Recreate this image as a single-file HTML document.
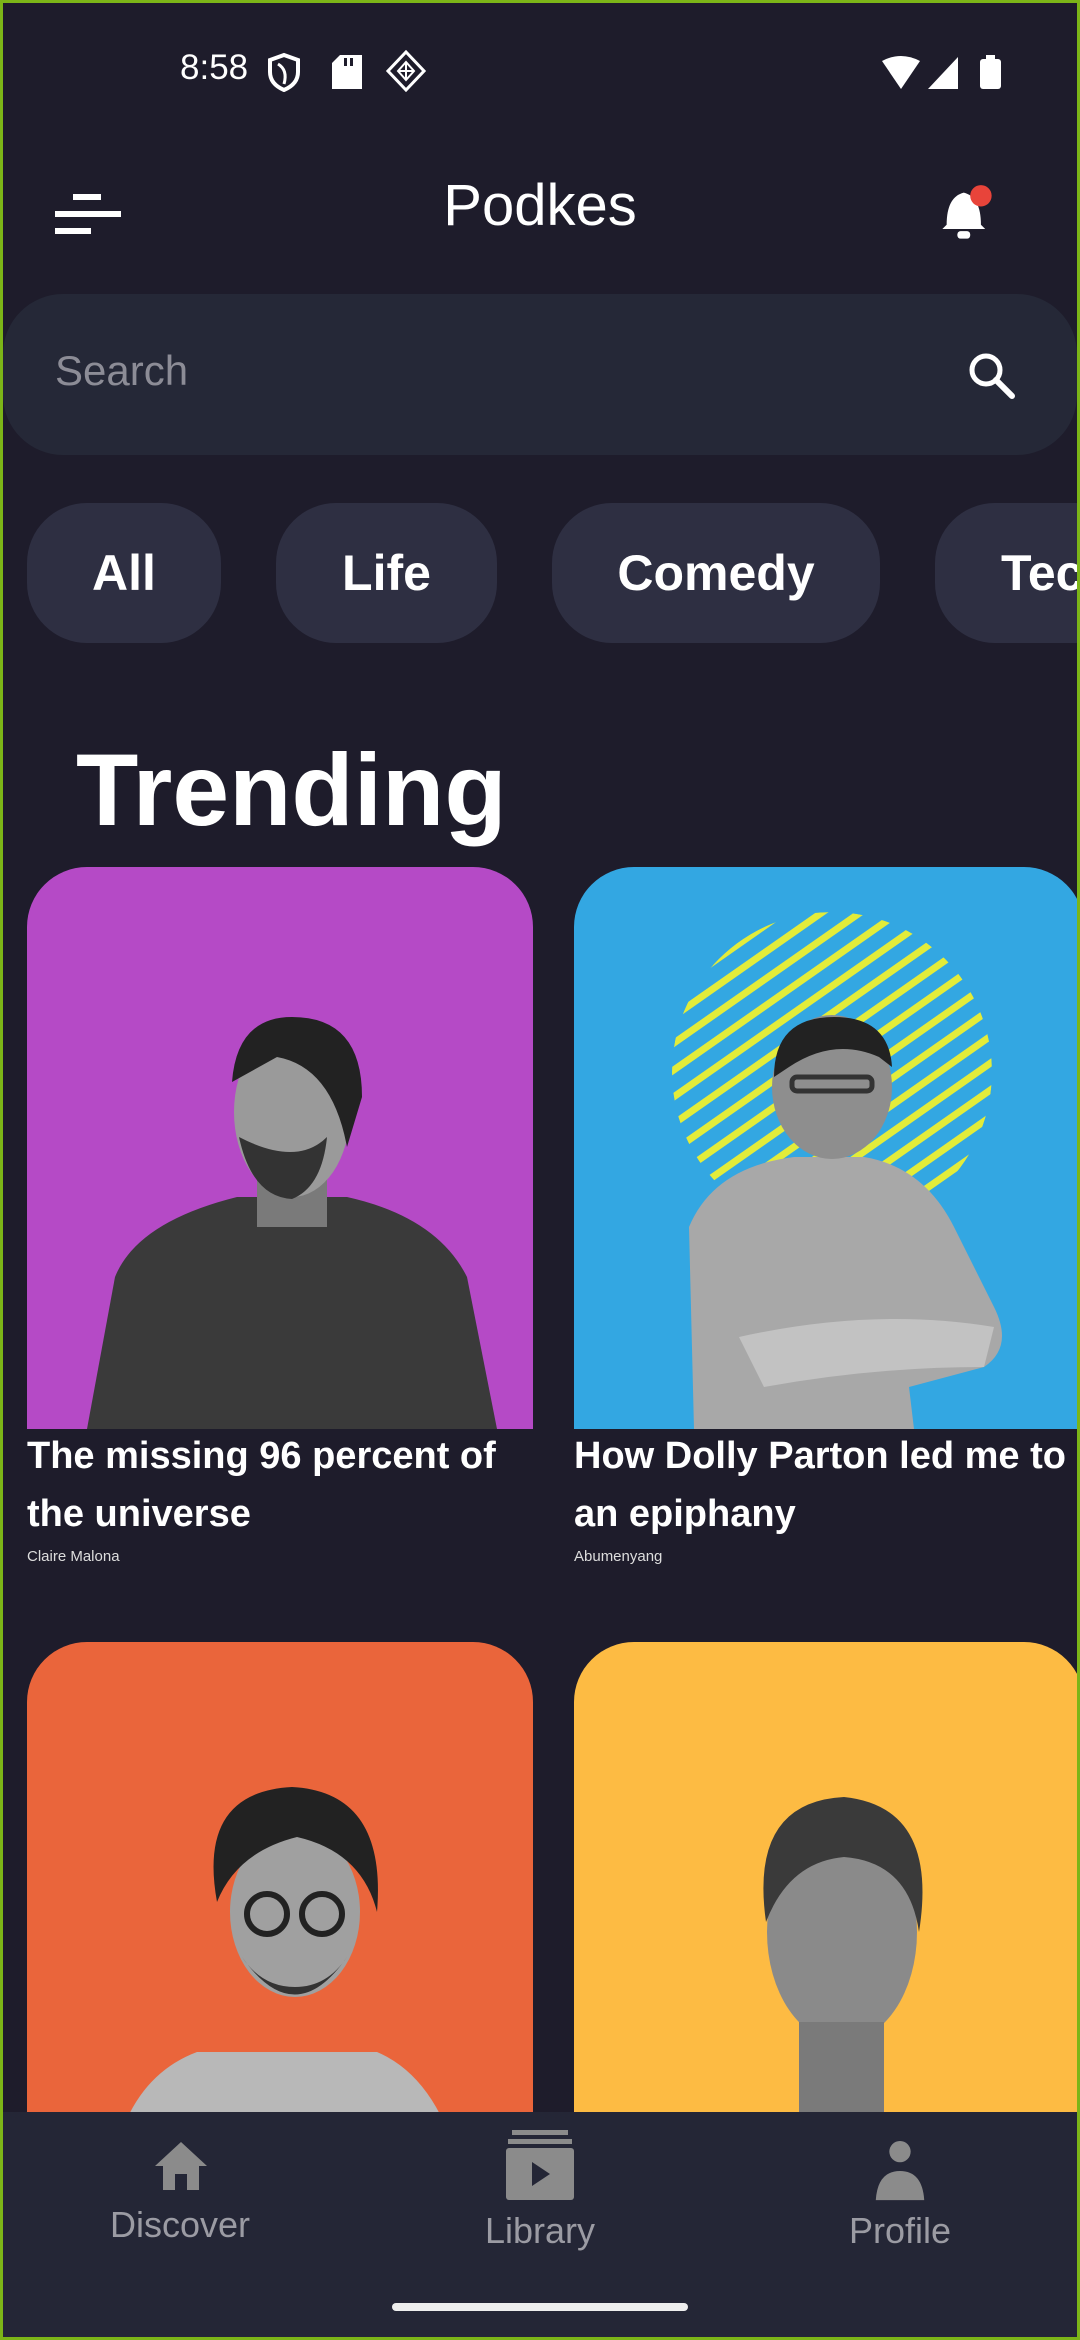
<!DOCTYPE html>
<html><head><meta charset="utf-8"><style>
*{margin:0;padding:0;box-sizing:border-box}
html,body{width:1080px;height:2340px;overflow:hidden;background:#1e1c2b}
body{position:relative;font-family:"Liberation Sans",sans-serif;color:#fff}
.a{position:absolute}
.chip{position:absolute;top:503px;height:140px;border-radius:60px;background:#2e2f42;font-weight:bold;font-size:50px;line-height:140px;text-align:center}
.card{position:absolute;border-radius:60px 60px 0 0;overflow:hidden}
.t{position:absolute;font-weight:bold;font-size:38px;line-height:58px;white-space:nowrap}
.au{position:absolute;font-size:15px;color:#ddd}
.nl{position:absolute;top:2210px;font-size:36px;color:#9b9ba3;text-align:center;width:300px}
</style></head><body>
<!-- status bar -->
<div class="a" style="left:180px;top:48px;font-size:35px">8:58</div>
<svg class="a" style="left:266px;top:52px" width="36" height="40" viewBox="0 0 36 40"><path d="M18 3 L32 8 V20 Q32 32 18 38 Q4 32 4 20 V8 Z" fill="none" stroke="#fff" stroke-width="4"/><path d="M12 12 Q22 18 18 32" fill="none" stroke="#fff" stroke-width="3"/></svg>
<svg class="a" style="left:332px;top:55px" width="30" height="34"><path d="M8 0 H30 V34 H0 V8 Z" fill="#fff"/><rect x="12" y="3" width="3" height="8" fill="#1e1c2b"/><rect x="18" y="3" width="3" height="8" fill="#1e1c2b"/></svg>
<svg class="a" style="left:386px;top:50px" width="40" height="42" viewBox="0 0 40 42"><path d="M20 2 L38 21 L20 40 L2 21 Z" fill="none" stroke="#fff" stroke-width="3"/><path d="M12 21 L20 12 L28 21 L20 30 Z M12 21 H28 M20 12 V30" fill="none" stroke="#fff" stroke-width="2"/></svg>
<svg class="a" style="left:882px;top:55px" width="124" height="36"><path d="M0 6 Q19 -4 38 6 L19 34 Z" fill="#fff"/><path d="M76 2 V34 H46 Z" fill="#fff"/><rect x="98" y="4" width="21" height="30" rx="3" fill="#fff"/><rect x="104" y="0" width="9" height="5" fill="#fff"/></svg>
<!-- app bar -->
<svg class="a" style="left:55px;top:194px" width="68" height="40"><rect x="0" y="17" width="66" height="6" fill="#fff"/><rect x="0" y="34" width="36" height="6" fill="#fff"/><rect x="18" y="0" width="28" height="6" fill="#fff"/></svg>
<div class="a" style="left:0;width:1080px;top:172px;text-align:center;font-size:58px">Podkes</div>
<svg class="a" style="left:938px;top:184px" width="58" height="60" viewBox="0 0 54 56"><path d="M8 38 Q8 12 24 8 Q40 12 40 38 L44 42 H4 Z" fill="#fff"/><rect x="18" y="44" width="12" height="7" rx="3" fill="#fff"/><circle cx="40" cy="11" r="10" fill="#e8443a"/></svg>
<!-- search -->
<div class="a" style="left:3px;top:294px;width:1074px;height:161px;border-radius:60px;background:#252837"></div>
<div class="a" style="left:55px;top:347px;font-size:42px;color:#8c8c96">Search</div>
<svg class="a" style="left:966px;top:350px" width="52" height="52" viewBox="0 0 52 52"><circle cx="20" cy="20" r="14" fill="none" stroke="#fff" stroke-width="5"/><path d="M30 30 L46 46" stroke="#fff" stroke-width="6" stroke-linecap="round"/></svg>
<!-- chips -->
<div class="chip" style="left:27px;width:194px">All</div>
<div class="chip" style="left:276px;width:221px">Life</div>
<div class="chip" style="left:552px;width:328px">Comedy</div>
<div class="chip" style="left:935px;width:200px;text-align:left;padding-left:66px">Tech</div>
<div class="a" style="left:76px;top:732px;font-size:102px;font-weight:bold">Trending</div>
<!-- card 1 -->
<div class="card" style="left:27px;top:867px;width:506px;height:562px;background:#b54ac6">
<svg width="506" height="562"><path d="M60 562 L88 410 Q110 355 210 330 L320 330 Q410 350 440 410 L470 562 Z" fill="#3a3a3a"/><rect x="230" y="300" width="70" height="60" fill="#7a7a7a"/><ellipse cx="265" cy="245" rx="58" ry="85" fill="#9a9a9a"/><path d="M205 215 Q210 150 265 150 Q335 150 335 230 L320 280 Q305 200 250 190 Z" fill="#222"/><path d="M212 270 Q225 330 265 332 Q295 320 300 270 Q270 300 212 270 Z" fill="#333"/></svg></div>
<div class="t" style="left:27px;top:1427px">The missing 96 percent of</div>
<div class="t" style="left:27px;top:1485px">the universe</div>
<div class="au" style="left:27px;top:1548px">Claire Malona</div>
<!-- card 2 -->
<div class="card" style="left:574px;top:867px;width:510px;height:562px;background:#33a7e2">
<svg width="510" height="562"><defs><clipPath id="c"><circle cx="258" cy="205" r="160"/></clipPath><pattern id="p" width="22" height="22" patternUnits="userSpaceOnUse" patternTransform="rotate(-35)"><rect width="22" height="7" fill="#e3ec3a"/></pattern></defs><circle cx="258" cy="205" r="160" fill="url(#p)" clip-path="url(#c)"/><path d="M120 562 L115 360 Q140 300 220 290 L290 290 Q350 300 380 360 L420 440 Q440 480 410 500 L335 520 L340 562 Z" fill="#a8a8a8"/><path d="M165 470 Q300 440 420 460 L410 500 Q300 500 190 520 Z" fill="#c2c2c2"/><ellipse cx="258" cy="220" rx="60" ry="72" fill="#8e8e8e"/><path d="M200 210 Q200 150 260 150 Q315 150 318 200 L305 190 Q260 170 215 200 Z" fill="#222"/><rect x="218" y="210" width="80" height="14" rx="5" fill="none" stroke="#333" stroke-width="5"/></svg></div>
<div class="t" style="left:574px;top:1427px">How Dolly Parton led me to</div>
<div class="t" style="left:574px;top:1485px">an epiphany</div>
<div class="au" style="left:574px;top:1548px">Abumenyang</div>
<!-- card 3 -->
<div class="card" style="left:27px;top:1642px;width:506px;height:560px;background:#ea653b">
<svg width="506" height="560"><path d="M80 560 Q90 440 170 410 L350 410 Q420 440 440 560 Z" fill="#b8b8b8"/><ellipse cx="268" cy="270" rx="65" ry="85" fill="#a0a0a0"/><path d="M190 260 Q170 150 265 145 Q360 150 350 270 Q335 210 270 195 Q210 210 190 260 Z" fill="#222"/><circle cx="240" cy="272" r="20" fill="none" stroke="#222" stroke-width="6"/><circle cx="295" cy="272" r="20" fill="none" stroke="#222" stroke-width="6"/><path d="M215 315 Q268 390 320 315 Q300 345 268 345 Q235 345 215 315 Z" fill="#333"/></svg></div>
<!-- card 4 -->
<div class="card" style="left:574px;top:1642px;width:510px;height:560px;background:#fdbb43">
<svg width="510" height="560"><ellipse cx="268" cy="290" rx="75" ry="110" fill="#8a8a8a"/><path d="M192 280 Q175 160 270 155 Q365 165 345 290 Q335 220 270 215 Q215 220 192 280 Z" fill="#3a3a3a"/><rect x="225" y="380" width="85" height="100" fill="#7a7a7a"/></svg></div>
<!-- nav -->
<div class="a" style="left:0;top:2112px;width:1080px;height:228px;background:#242636"></div>
<svg class="a" style="left:153px;top:2140px" width="56" height="52" viewBox="0 0 56 52"><path d="M28 2 L54 26 H46 V50 H34 V34 H22 V50 H10 V26 H2 Z" fill="#8b8b8b"/></svg>
<div class="nl" style="left:30px;top:2204px">Discover</div>
<svg class="a" style="left:506px;top:2130px" width="68" height="72" viewBox="0 0 68 72"><rect x="6" y="0" width="56" height="5" fill="#8b8b8b"/><rect x="2" y="9" width="64" height="5" fill="#8b8b8b"/><rect x="0" y="18" width="68" height="52" rx="3" fill="#8b8b8b"/><path d="M26 32 L44 44 L26 56 Z" fill="#242636"/></svg>
<div class="nl" style="left:390px">Library</div>
<svg class="a" style="left:875px;top:2140px" width="50" height="62" viewBox="0 0 50 64"><circle cx="25" cy="12" r="11" fill="#8b8b8b"/><path d="M0 62 Q2 32 25 32 Q48 32 50 62 Z" fill="#8b8b8b"/></svg>
<div class="nl" style="left:750px">Profile</div>
<div class="a" style="left:392px;top:2303px;width:296px;height:8px;border-radius:4px;background:#eee"></div>
<div class="a" style="left:0;top:0;width:1080px;height:2340px;border:3px solid #7cb518;pointer-events:none"></div>
</body></html>
